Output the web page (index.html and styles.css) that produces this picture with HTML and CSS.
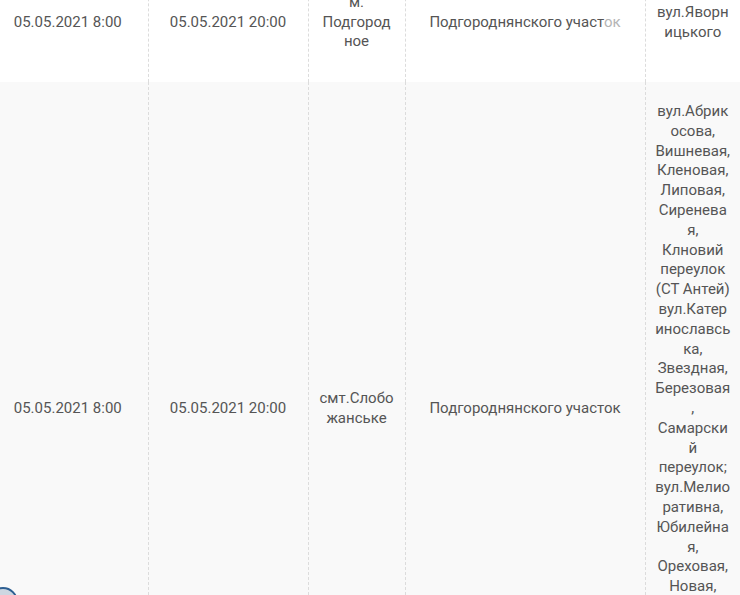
FILE: index.html
```html
<!DOCTYPE html>
<html lang="uk">
<head>
    <meta charset="UTF-8">
    <meta name="viewport" content="width=device-width, initial-scale=1.0">
    <title>Графік відключень</title>
    <link rel="stylesheet" href="styles.css">
</head>
<body>
    <div class="table-wrap">
        <table class="schedule">
            <colgroup>
                <col class="col-date">
                <col class="col-date">
                <col class="col-town">
                <col class="col-area">
                <col class="col-streets">
            </colgroup>
            <tbody>
                <tr class="row-first">
                    <td>05.05.2021 8:00</td>
                    <td>05.05.2021 20:00</td>
                    <td>м. Подгородное</td>
                    <td>Подгороднянского участ<span class="fade">ок</span></td>
                    <td>вул.Яворницького</td>
                </tr>
                <tr class="row-long">
                    <td>05.05.2021 8:00</td>
                    <td>05.05.2021 20:00</td>
                    <td>смт.Слобожанське</td>
                    <td>Подгороднянского участок</td>
                    <td>вул.Абрикосова, Вишневая, Кленовая, Липовая, Сиреневая, Клновий переулок (СТ Антей) вул.Катеринославська, Звездная, Березовая, Самарский переулок; вул.Мелиоративна, Юбилейная, Ореховая, Новая, Садовая, Полевая, Мирная, Степная, Луговая, Речная</td>
                </tr>
            </tbody>
        </table>
    </div>

    <button class="float-btn" aria-label="Меню"></button>
</body>
</html>
```

FILE: styles.css
```css
body {
    margin: 0;
    padding: 0;
    background-color: #fff;
    font-family: Roboto, "Liberation Sans", sans-serif;
    font-size: 15px;
    line-height: 1.32;
    color: #555;
    overflow: hidden;
}

/* страница прокручена чуть вниз и вправо */
.table-wrap {
    margin: -37px 0 0 -12px;
}

.schedule {
    width: 752px;
    table-layout: fixed;
    border-collapse: collapse;
}

.col-date {
    width: 160px;
}

.col-town {
    width: 97px;
}

.col-area {
    width: 240px;
}

.col-streets {
    width: 95px;
}

.schedule td {
    padding: 20px 10px;
    text-align: center;
    vertical-align: middle;
    word-break: break-word;
    border-right: 1px dashed #dcdcdc;
}

.schedule td:last-child {
    padding-left: 9.5px;
    padding-right: 9.5px;
    border-right: none;
}

.schedule tr {
    background-color: #f9f9f9;
}

.schedule .row-first {
    height: 119px;
    background-color: #fff;
}

.schedule .row-long td {
    padding-bottom: 29px;
}

.fade {
    color: #b5b5b5;
}

.float-btn {
    position: fixed;
    left: -12px;
    bottom: -22px;
    width: 30px;
    height: 30px;
    padding: 0;
    border: 2px solid #2d5f92;
    border-radius: 50%;
    background-color: #cdd7e1;
}
```
